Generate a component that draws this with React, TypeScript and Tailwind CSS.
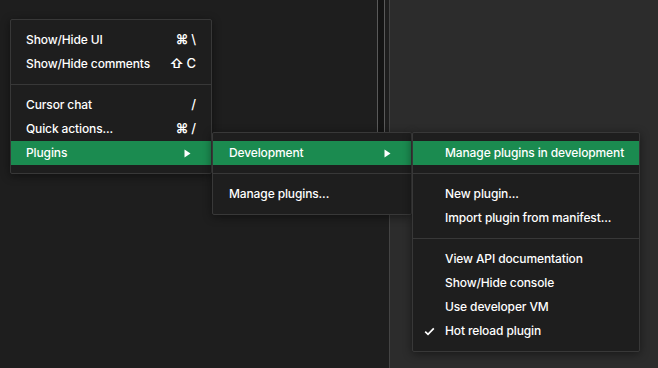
import React from "react";

const font = { fontFamily: "Inter, 'Noto Sans', sans-serif" };

function Arrow() {
  return (
    <svg width="7" height="9" viewBox="0 0 7 9" className="block">
      <path d="M0.5 0.5 L6.5 4.5 L0.5 8.5 Z" fill="#ffffff" />
    </svg>
  );
}

function Check() {
  return (
    <svg width="11" height="9" viewBox="0 0 11 9" className="block">
      <path d="M1.2 4.6 L4 7.3 L9.8 1.3" fill="none" stroke="#ffffff" strokeWidth="1.7" />
    </svg>
  );
}

type Row =
  | { sep: true }
  | { label: string; right?: React.ReactNode; active?: boolean; check?: boolean; sep?: false };

function Menu({
  rows,
  className,
  padLeft,
}: {
  rows: Row[];
  className: string;
  padLeft: string;
}) {
  return (
    <div
      className={`absolute py-2 bg-[#1e1e1e] border border-[#383838] rounded-[2px] shadow-[0_2px_10px_rgba(0,0,0,0.45)] text-[12px] font-medium tracking-[-0.12px] text-white ${className}`}
      style={font}
    >
      {rows.map((r, i) =>
        "label" in r ? (
          <div
            key={i}
            className={`relative flex items-center h-6 ${padLeft} pr-[15px] ${r.active ? "bg-[#1b8b50]" : ""}`}
          >
            {r.check && (
              <span className="absolute left-[11px] top-[8px]">
                <Check />
              </span>
            )}
            <span className="flex-1 whitespace-nowrap">{r.label}</span>
            {r.right}
          </div>
        ) : (
          <div key={i} className="my-2 h-px bg-[#383838]" />
        )
      )}
    </div>
  );
}

function Keys({ a, b }: { a: string; b: string }) {
  return (
    <span className="flex items-center gap-[3px] text-[13px]">
      <span className="font-bold">{a}</span>
      <span>{b}</span>
    </span>
  );
}

export default function App() {
  const arrow = (
    <span className="mr-[5px]">
      <Arrow />
    </span>
  );
  return (
    <div className="relative w-[658px] h-[368px] overflow-hidden flex bg-[#1e1e1e]">
      <div className="w-[377px] bg-[#1e1e1e]" />
      <div className="w-[8px] flex flex-col">
        <div className="h-[200px] bg-[#141414] border-l border-r border-[#5a5a5a]" />
        <div className="flex-1 bg-[#1e1e1e]" />
      </div>
      <div className="w-[4px] bg-[#1e1e1e]" />
      <div className="w-px bg-[#444444]" />
      <div className="flex-1 bg-[#2c2c2c]" />

      <Menu
        className="left-[10px] top-[19px] w-[202px]"
        padLeft="pl-[15px]"
        rows={[
          { label: "Show/Hide UI", right: <Keys a="⌘" b="\" /> },
          { label: "Show/Hide comments", right: <Keys a="⇧" b="C" /> },
          { sep: true },
          { label: "Cursor chat", right: <span className="text-[13px]">/</span> },
          { label: "Quick actions...", right: <Keys a="⌘" b="/" /> },
          { label: "Plugins", right: arrow, active: true },
        ]}
      />
      <Menu
        className="left-[212px] top-[132px] w-[200px]"
        padLeft="pl-[16px]"
        rows={[
          { label: "Development", right: arrow, active: true },
          { sep: true },
          { label: "Manage plugins..." },
        ]}
      />
      <Menu
        className="left-[412px] top-[132px] w-[228px]"
        padLeft="pl-[32px]"
        rows={[
          { label: "Manage plugins in development", active: true },
          { sep: true },
          { label: "New plugin..." },
          { label: "Import plugin from manifest..." },
          { sep: true },
          { label: "View API documentation" },
          { label: "Show/Hide console" },
          { label: "Use developer VM" },
          { label: "Hot reload plugin", check: true },
        ]}
      />
    </div>
  );
}
